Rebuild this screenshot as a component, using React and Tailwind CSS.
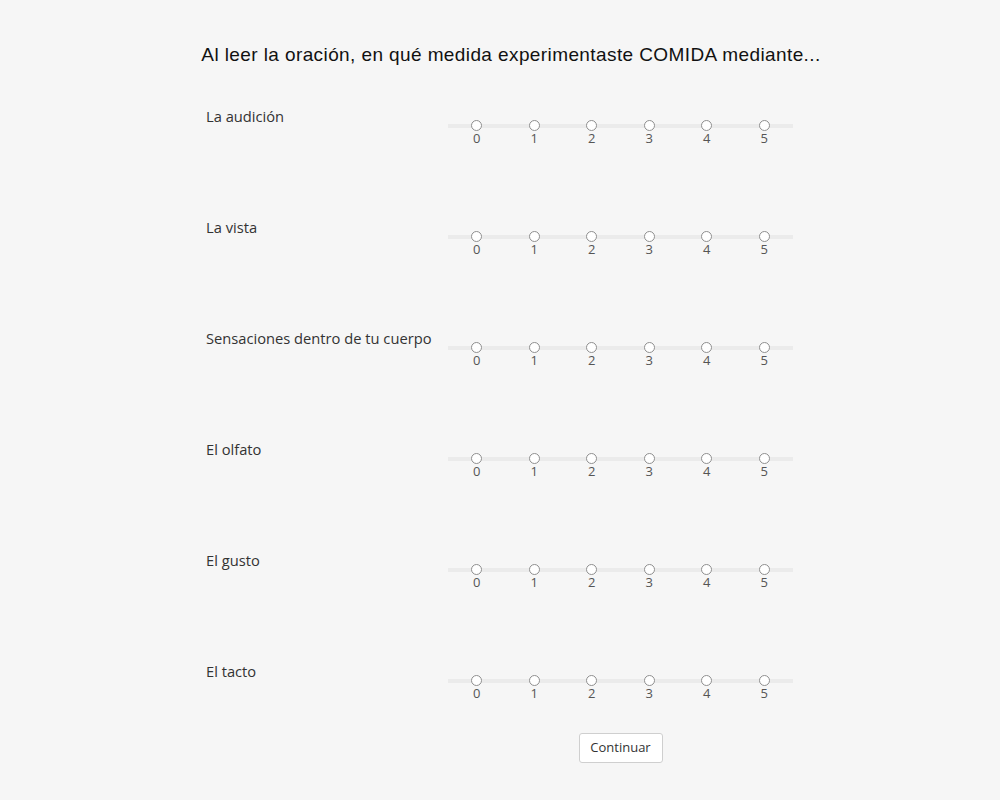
import React from "react";

const items = [
  "La audición",
  "La vista",
  "Sensaciones dentro de tu cuerpo",
  "El olfato",
  "El gusto",
  "El tacto",
];

function Row({ label }) {
  return (
    <div className="flex items-start h-[40px]">
      <div
        className="w-[242px] shrink-0 -mt-[1px] text-[14.7px] leading-[20px] text-[#333]"
        style={{ fontFamily: '"Open Sans", sans-serif' }}
      >
        {label}
      </div>
      <div className="relative w-[345px] pt-[13px]">
        <div className="absolute left-0 right-0 top-[17px] h-[4px] bg-[#ebebeb]" />
        <div className="relative grid grid-cols-6">
          {[0, 1, 2, 3, 4, 5].map((n) => (
            <div key={n} className="flex flex-col items-center">
              <div className="w-[11px] h-[11px] rounded-full border border-[#8f8f8f] bg-white" />
              <div
                className="text-[13px] leading-[16px] text-[#555] -mt-[1px]"
                style={{ fontFamily: '"Open Sans", sans-serif' }}
              >
                {n}
              </div>
            </div>
          ))}
        </div>
      </div>
    </div>
  );
}

export default function App() {
  return (
    <div className="min-h-[800px] bg-[#f6f6f6]">
      <div
        className="pt-[43px] pl-[22px] text-center text-[19px] leading-[24px] tracking-[0.4px] text-[#111]"
        style={{ fontFamily: '"Liberation Sans", Arial, sans-serif' }}
      >
        Al leer la oración, en qué medida experimentaste COMIDA mediante...
      </div>
      <div className="w-[588px] mx-auto mt-[40px] flex flex-col gap-y-[71px]">
        {items.map((l) => (
          <Row key={l} label={l} />
        ))}
      </div>
      <div className="w-[588px] mx-auto flex mt-[31px]">
        <div className="w-[242px] shrink-0" />
        <div className="w-[345px] flex justify-center">
          <button
            className="w-[84px] h-[30px] border border-[#cfcfcf] rounded-[3px] bg-white text-[13px] text-[#333]"
            style={{ fontFamily: '"Open Sans", sans-serif' }}
          >
            Continuar
          </button>
        </div>
      </div>
    </div>
  );
}
